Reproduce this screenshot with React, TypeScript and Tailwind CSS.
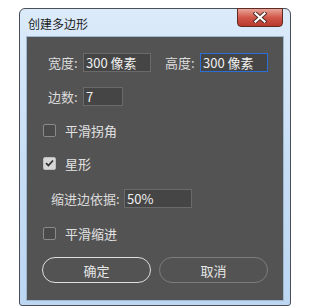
import React from "react";

const font = { fontFamily: '"Noto Sans CJK SC", "Liberation Sans", sans-serif' };

function Field({ value, width, focused }: { value: string; width: string; focused?: boolean }) {
  return (
    <div
      className={`${width} h-[19px] bg-[#454545] border ${
        focused ? "border-[#2a6fd6]" : "border-[#6a6a6a]"
      } flex items-center pl-[2px] text-[13px] text-[#f0f0f0] leading-none`}
    >
      {value}
    </div>
  );
}

function Check({ checked, label }: { checked?: boolean; label: string }) {
  return (
    <div className="flex items-center h-[20px] pl-[16px] gap-[9px]">
      {checked ? (
        <div className="w-[13px] h-[13px] rounded-[2px] bg-[#d6d6d6] border border-[#bdbdbd] flex items-center justify-center">
          <svg width="9" height="8" viewBox="0 0 9 8">
            <path d="M1 4.2 L3.4 6.5 L8 1.5" fill="none" stroke="#333" strokeWidth="1.8" />
          </svg>
        </div>
      ) : (
        <div className="w-[13px] h-[13px] rounded-[2px] bg-[#4a4a4a] border border-[#8a8a8a]" />
      )}
      <span className="text-[13px] text-[#e2e2e2] leading-none">{label}</span>
    </div>
  );
}

export default function App() {
  return (
    <div className="w-[326px] h-[308px] bg-white pl-[19px] pt-[8px]" style={font}>
      <div className="w-[272px] h-[298px] border border-[#4a4f57] rounded-t-[6px] rounded-b-[3px] bg-gradient-to-b from-[#dcebfa] via-[#c9def5] to-[#bcd6f2] flex flex-col px-[6px] pb-[4px]">
        {/* Title bar */}
        <div className="h-[27px] flex justify-between items-start">
          <span className="text-[12px] text-[#1a1a1a] mt-[9px] ml-[2px] leading-none">创建多边形</span>
          <div className="w-[46px] h-[19px] mr-[1px] -mt-[1px] rounded-b-[4px] border border-[#5c2b24] bg-gradient-to-b from-[#e8a498] via-[#d0574a] to-[#b9382c] flex items-center justify-center">
            <svg width="14" height="11" viewBox="0 0 14 11">
              <path d="M2.5 1.5 L11.5 9.5 M11.5 1.5 L2.5 9.5" stroke="#4a2a26" strokeWidth="4" strokeLinecap="square" />
              <path d="M2.5 1.5 L11.5 9.5 M11.5 1.5 L2.5 9.5" stroke="#ffffff" strokeWidth="2.2" strokeLinecap="square" />
            </svg>
          </div>
        </div>

        {/* Panel */}
        <div className="flex-1 bg-[#535353] border border-[#9fb8d2] flex flex-col pt-[16px]">
          <div className="flex items-center pl-[21px]">
            <span className="w-[35px] text-[13px] text-[#dcdcdc] leading-none">宽度:</span>
            <Field value="300 像素" width="w-[68px]" />
            <span className="w-[35px] ml-[14px] text-[13px] text-[#dcdcdc] leading-none">高度:</span>
            <Field value="300 像素" width="w-[68px]" focused />
          </div>

          <div className="flex items-center pl-[21px] mt-[15px]">
            <span className="w-[35px] text-[13px] text-[#dcdcdc] leading-none">边数:</span>
            <Field value="7" width="w-[40px]" />
          </div>

          <div className="mt-[14px]">
            <Check label="平滑拐角" />
          </div>
          <div className="mt-[13px]">
            <Check checked label="星形" />
          </div>

          <div className="flex items-center pl-[24px] mt-[16px]">
            <span className="w-[73px] text-[13px] text-[#dcdcdc] leading-none">缩进边依据:</span>
            <Field value="50%" width="w-[68px]" />
          </div>

          <div className="mt-[15px]">
            <Check label="平滑缩进" />
          </div>

          <div className="flex pl-[15px] gap-[8px] mt-[14px]">
            <button className="w-[109px] h-[26px] rounded-full border border-[#dedede] text-[13px] text-[#e6e6e6] leading-none">
              确定
            </button>
            <button className="w-[109px] h-[26px] rounded-full border border-[#7c7c7c] text-[13px] text-[#e6e6e6] leading-none">
              取消
            </button>
          </div>
        </div>
      </div>
    </div>
  );
}
